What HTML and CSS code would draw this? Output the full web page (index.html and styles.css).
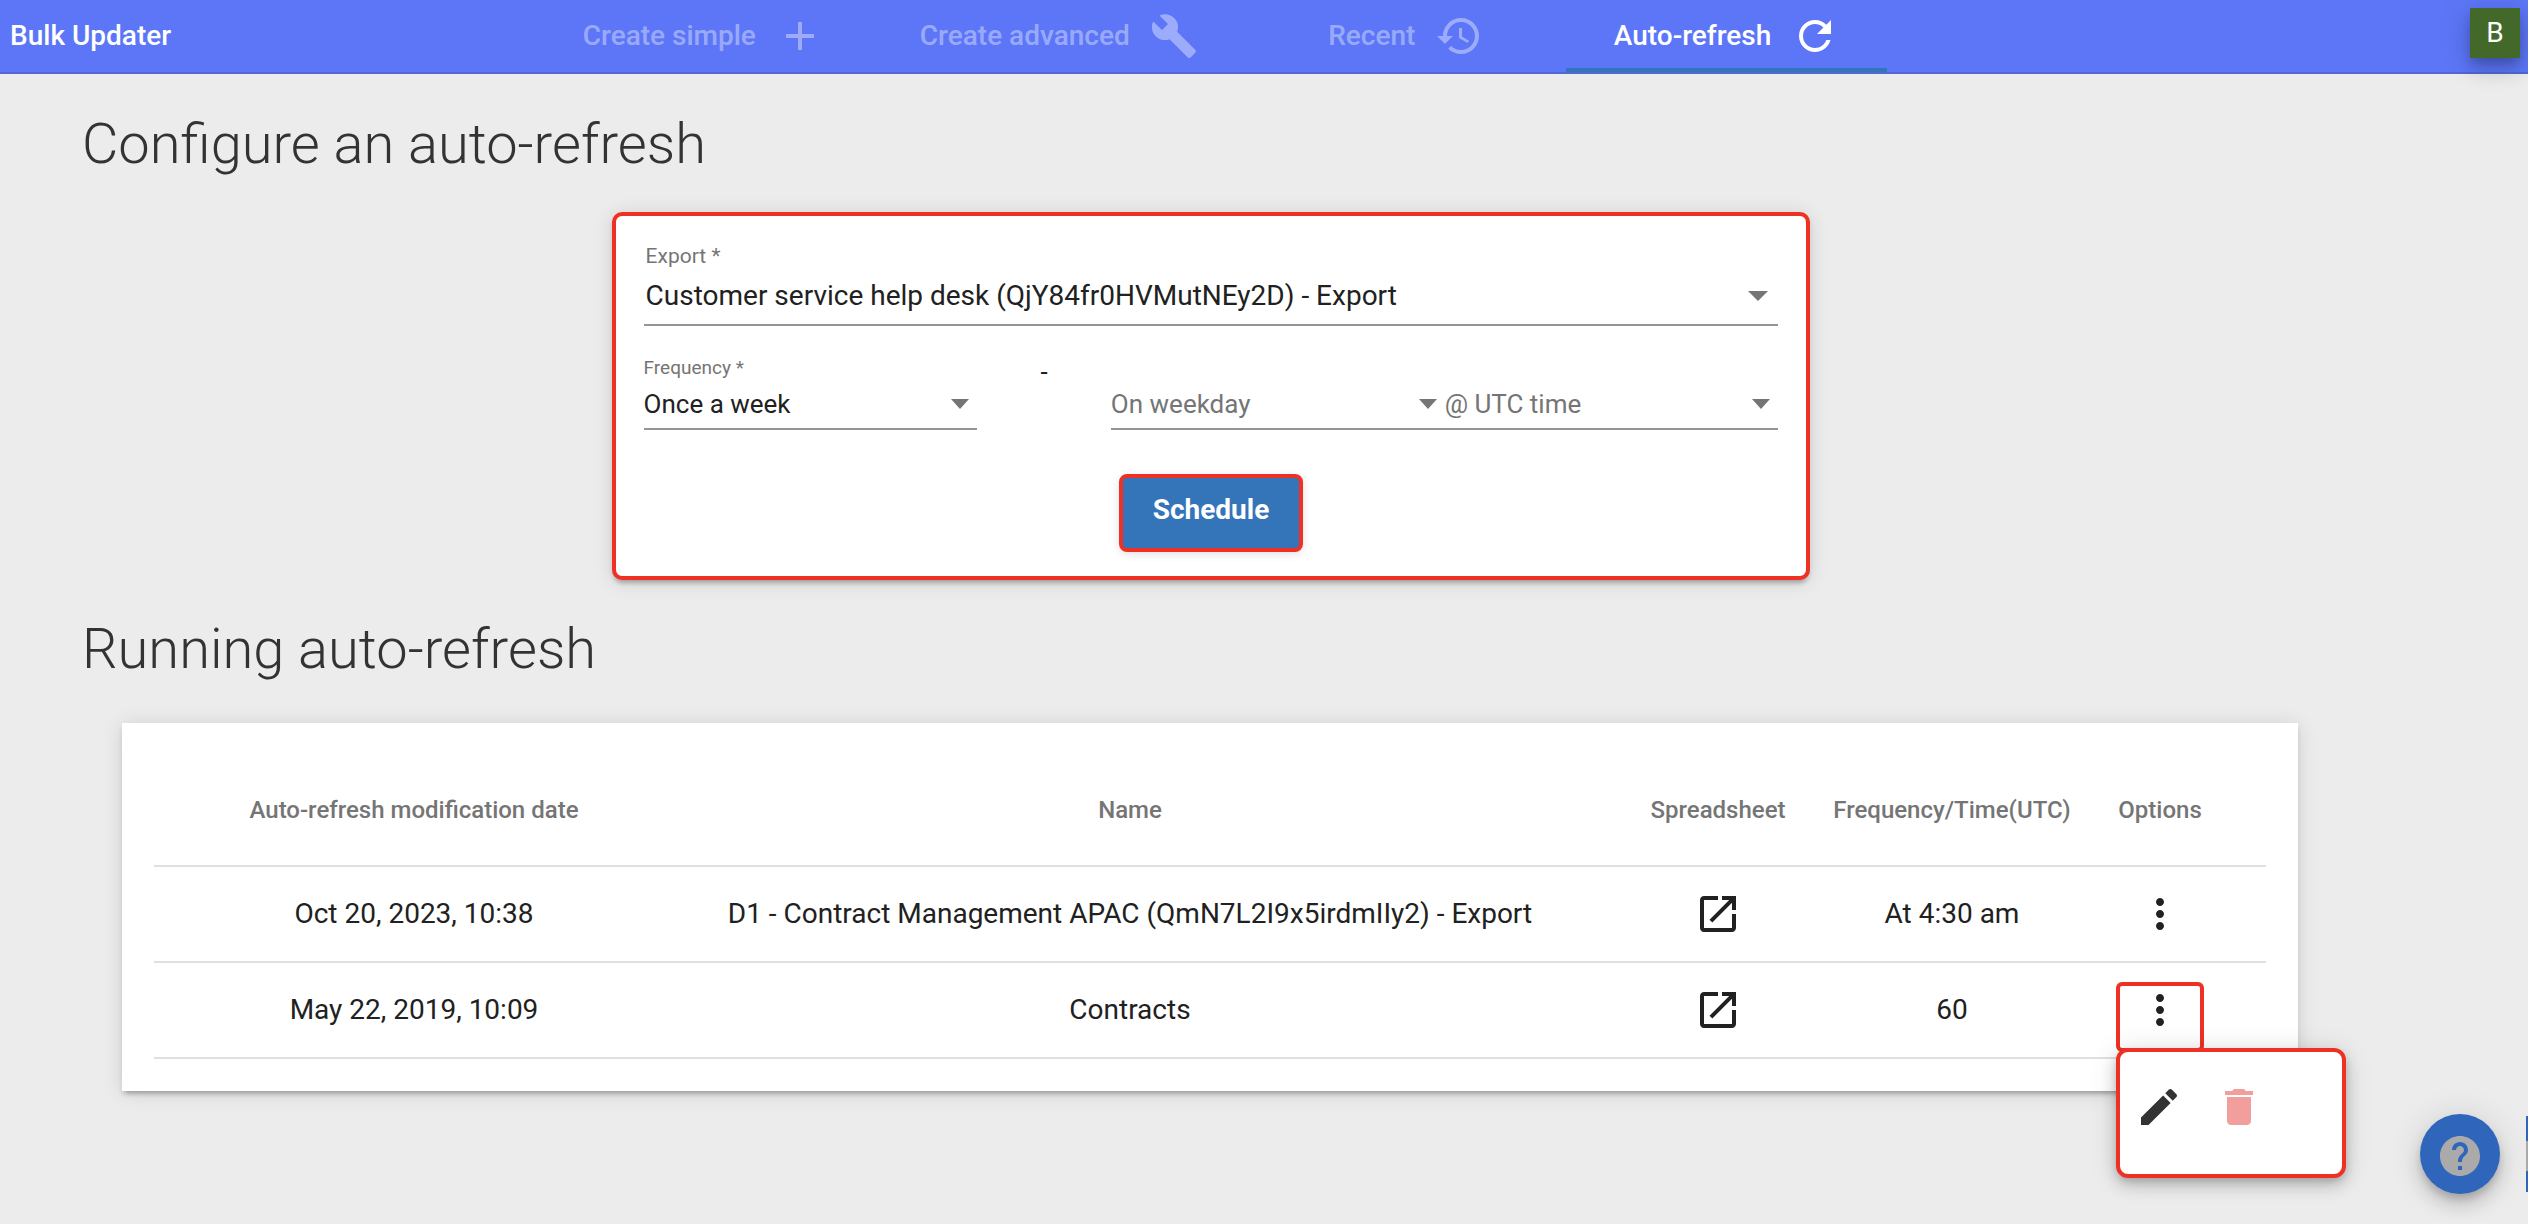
FILE: index.html
```html
<!DOCTYPE html>
<html lang="en">
<head>
<meta charset="utf-8">
<meta name="viewport" content="width=device-width, initial-scale=1">
<title>Bulk Updater</title>
<link rel="stylesheet" href="styles.css">
</head>
<body>
<header class="topbar">
  <span class="brand">Bulk Updater</span>
  <nav class="tabs">
    <a class="tab" href="#simple">Create simple
      <svg class="icon" viewBox="0 0 24 24" aria-hidden="true"><path d="M19 13h-6v6h-2v-6H5v-2h6V5h2v6h6v2z"/></svg></a>
    <a class="tab" href="#advanced">Create advanced
      <svg class="icon" viewBox="0 0 24 24" aria-hidden="true"><path d="M22.7 19l-9.1-9.1c.9-2.3.4-5-1.5-6.9-2-2-5-2.4-7.4-1.3L9 6 6 9 1.6 4.7C.4 7.1.9 10.1 2.9 12.1c1.9 1.9 4.6 2.4 6.9 1.5l9.1 9.1c.4.4 1 .4 1.4 0l2.3-2.3c.5-.4.5-1.1.1-1.4z"/></svg></a>
    <a class="tab" href="#recent">Recent
      <svg class="icon" viewBox="0 0 24 24" aria-hidden="true"><path d="M13 3c-4.97 0-9 4.03-9 9H1l3.89 3.89.07.14L9 12H6c0-3.87 3.13-7 7-7s7 3.13 7 7-3.13 7-7 7c-1.93 0-3.68-.79-4.94-2.06l-1.42 1.42C8.27 19.99 10.51 21 13 21c4.97 0 9-4.03 9-9s-4.03-9-9-9zm-1 5v5l4.28 2.54.72-1.21-3.5-2.08V8H12z"/></svg></a>
    <a class="tab tab-active" href="#auto-refresh" aria-current="page">Auto-refresh
      <svg class="icon" viewBox="0 0 24 24" aria-hidden="true"><path d="M17.65 6.35C16.2 4.9 14.21 4 12 4c-4.42 0-7.99 3.58-7.99 8s3.57 8 7.99 8c3.73 0 6.84-2.55 7.73-6h-2.08c-.82 2.33-3.04 4-5.65 4-3.31 0-6-2.69-6-6s2.69-6 6-6c1.66 0 3.14.69 4.22 1.78L13 11h7V4l-2.35 2.35z"/></svg></a>
  </nav>
  <button class="avatar" type="button" aria-label="Account">B</button>
</header>

<main class="page">
  <h1 class="title">Configure an auto-refresh</h1>
  <form class="form-card">
    <div class="field field-large">
      <label class="label" for="export">Export *</label>
      <div class="control">
        <select id="export"><option>Customer service help desk (QjY84fr0HVMutNEy2D) - Export</option></select>
      </div>
    </div>
    <div class="schedule-row">
      <div class="field">
        <label class="label" for="frequency">Frequency *</label>
        <div class="control">
          <select id="frequency"><option>Once a week</option></select>
        </div>
      </div>
      <span class="dash">-</span>
      <div class="field">
        <div class="control">
          <select class="placeholder" aria-label="Weekday"><option>On weekday</option></select>
        </div>
      </div>
      <div class="field">
        <div class="control">
          <select class="placeholder" aria-label="UTC time"><option>@ UTC time</option></select>
        </div>
      </div>
    </div>
    <button class="submit" type="button">Schedule</button>
  </form>

  <h2 class="title title-jobs">Running auto-refresh</h2>
  <section class="table-card">
    <table class="jobs">
      <thead>
        <tr>
          <th class="col-date">Auto-refresh modification date</th>
          <th>Name</th>
          <th class="col-sheet">Spreadsheet</th>
          <th class="col-freq">Frequency/Time(UTC)</th>
          <th class="col-options">Options</th>
        </tr>
      </thead>
      <tbody>
        <tr>
          <td class="col-date">Oct 20, 2023, 10:38</td>
          <td>D1 - Contract Management APAC (QmN7L2I9x5irdmIIy2) - Export</td>
          <td><a class="icon-link" href="#sheet-1" aria-label="Open spreadsheet"><svg class="icon" viewBox="0 0 24 24" aria-hidden="true"><path d="M19 19H5V5h7V3H5c-1.11 0-2 .9-2 2v14c0 1.1.89 2 2 2h14c1.1 0 2-.9 2-2v-7h-2v7zM14 3v2h3.59l-9.83 9.83 1.41 1.41L19 6.41V10h2V3h-7z"/></svg></a></td>
          <td>At 4:30 am</td>
          <td class="col-options">
            <div class="options">
              <button class="icon-button" type="button" aria-label="Options"><svg class="icon" viewBox="0 0 24 24" aria-hidden="true"><path d="M12 8c1.1 0 2-.9 2-2s-.9-2-2-2-2 .9-2 2 .9 2 2 2zm0 2c-1.1 0-2 .9-2 2s.9 2 2 2 2-.9 2-2-.9-2-2-2zm0 6c-1.1 0-2 .9-2 2s.9 2 2 2 2-.9 2-2-.9-2-2-2z"/></svg></button>
            </div>
          </td>
        </tr>
        <tr>
          <td class="col-date">May 22, 2019, 10:09</td>
          <td>Contracts</td>
          <td><a class="icon-link" href="#sheet-2" aria-label="Open spreadsheet"><svg class="icon" viewBox="0 0 24 24" aria-hidden="true"><path d="M19 19H5V5h7V3H5c-1.11 0-2 .9-2 2v14c0 1.1.89 2 2 2h14c1.1 0 2-.9 2-2v-7h-2v7zM14 3v2h3.59l-9.83 9.83 1.41 1.41L19 6.41V10h2V3h-7z"/></svg></a></td>
          <td>60</td>
          <td class="col-options">
            <div class="options options-open">
              <button class="icon-button" type="button" aria-label="Options" aria-expanded="true"><svg class="icon" viewBox="0 0 24 24" aria-hidden="true"><path d="M12 8c1.1 0 2-.9 2-2s-.9-2-2-2-2 .9-2 2 .9 2 2 2zm0 2c-1.1 0-2 .9-2 2s.9 2 2 2 2-.9 2-2-.9-2-2-2zm0 6c-1.1 0-2 .9-2 2s.9 2 2 2 2-.9 2-2-.9-2-2-2z"/></svg></button>
              <div class="menu">
                <button class="icon-button edit" type="button" aria-label="Edit"><svg class="icon" viewBox="0 0 24 24" aria-hidden="true"><path d="M3 17.25V21h3.75L17.81 9.94l-3.75-3.75L3 17.25zM20.71 7.04c.39-.39.39-1.02 0-1.41l-2.34-2.34c-.39-.39-1.02-.39-1.41 0l-1.83 1.83 3.75 3.75 1.83-1.83z"/></svg></button>
                <button class="icon-button delete" type="button" aria-label="Delete"><svg class="icon" viewBox="0 0 24 24" aria-hidden="true"><path d="M6 19c0 1.1.9 2 2 2h8c1.1 0 2-.9 2-2V7H6v12zM19 4h-3.500l-1-1h-5l-1 1H5v2h14V4z"/></svg></button>
              </div>
            </div>
          </td>
        </tr>
      </tbody>
    </table>
  </section>
</main>

<button class="help" type="button" aria-label="Help"><svg class="icon" viewBox="0 0 24 24" aria-hidden="true"><path d="M12 2C6.48 2 2 6.48 2 12s4.480 10 10 10 10-4.480 10-10S17.520 2 12 2zm1 17h-2v-2h2v2zm2.070-7.750l-.9.92C13.450 12.900 13 13.500 13 15h-2v-.5c0-1.100.45-2.100 1.170-2.830l1.240-1.260c.37-.36.59-.86.59-1.410 0-1.100-.9-2-2-2s-2 .9-2 2H8c0-2.210 1.790-4 4-4s4 1.790 4 4c0 .88-.36 1.680-.93 2.250z"/></svg></button>
<span class="edge-tab"></span>
</body>
</html>
```

FILE: styles.css
```css
:root {
  --red: #ee3124;
  --blue: #3474b9;
  --text: #212121;
  --muted: #757575;
  --gutter: 106px;
}

* { box-sizing: border-box; }

body {
  margin: 0;
  min-height: 100vh;
  overflow-x: hidden;
  background: #ececec;
  color: var(--text);
  font: 400 28px/36px Roboto, sans-serif;
}

button {
  padding: 0;
  border: 0;
  background: none;
  color: inherit;
  font: inherit;
  cursor: pointer;
}

.icon {
  display: block;
  flex: none;
  width: 48px;
  height: 48px;
  fill: currentColor;
}

/* Top bar */
.topbar {
  display: grid;
  grid-template-columns: 1fr auto 1fr var(--gutter);
  border-bottom: 2px solid #5069d4;
  background: #5c76f7;
  color: #fff;
  font-weight: 500;
}

.brand {
  align-self: center;
  padding-left: 10px;
}

.tabs { display: flex; }

.tab {
  display: flex;
  align-items: center;
  justify-content: center;
  gap: 20px;
  min-width: 320px;
  height: 72px;
  padding: 3px 48px 0;
  border-bottom: 4px solid transparent;
  color: rgba(255, 255, 255, 0.4);
  text-decoration: none;
}

.tab-active {
  border-bottom-color: var(--blue);
  color: #fff;
}

.avatar {
  grid-column: 4;
  align-self: start;
  justify-self: end;
  width: 50px;
  height: 50px;
  margin: 8px 8px 0 0;
  background: #42692a;
  font-weight: 400;
  box-shadow: 0 6px 10px -2px rgba(0, 0, 0, 0.2), 0 12px 20px rgba(0, 0, 0, 0.14), 0 2px 36px rgba(0, 0, 0, 0.12);
}

/* Page */
.page {
  margin-right: var(--gutter);
  padding: 38px 0 40px;
}

.title {
  margin: 0 0 36px 82px;
  color: #333;
  font-size: 56px;
  font-weight: 300;
  line-height: 64px;
}

.title-jobs { margin-bottom: 42px; }

/* Form */
.form-card {
  display: flex;
  flex-direction: column;
  width: 49.5%;
  margin: 0 auto 37px;
  padding: 28px 28px 24px;
  border: 4px solid var(--red);
  border-radius: 10px;
  background: #fff;
  box-shadow: 0 6px 4px -4px rgba(0, 0, 0, 0.2), 0 4px 4px rgba(0, 0, 0, 0.1), 0 2px 20px rgba(0, 0, 0, 0.12);
}

.label {
  display: block;
  color: var(--muted);
  font-size: 19px;
  line-height: 24px;
}

.control {
  display: grid;
  align-items: center;
  border-bottom: 2px solid #949494;
}

.control select {
  grid-area: 1 / 1;
  width: 100%;
  height: 48px;
  padding: 0;
  border: 0;
  border-radius: 0;
  background: none;
  color: var(--text);
  font: inherit;
  font-size: 26px;
  appearance: none;
}

.control select.placeholder { color: var(--muted); }

.control::after {
  content: "";
  grid-area: 1 / 1;
  justify-self: end;
  margin-right: 8px;
  border: 9px solid transparent;
  border-top: 10px solid var(--muted);
  border-bottom: 0;
  pointer-events: none;
}

.field-large .label {
  padding-left: 2px;
  font-size: 21px;
}

.field-large select {
  height: 56px;
  padding-left: 2px;
  font-size: 28px;
}

.field-large .control::after {
  margin-right: 10px;
  border-width: 10px 10px 0;
}

.schedule-row {
  display: grid;
  grid-template-columns: 5fr 2fr 5fr 5fr;
  align-items: end;
  margin-top: 30px;
}

.dash {
  align-self: start;
  font-size: 26px;
  line-height: 32px;
  text-align: center;
}

.submit {
  align-self: center;
  height: 78px;
  margin-top: 44px;
  padding: 0 30px 6px;
  border: 4px solid var(--red);
  border-radius: 8px;
  background: var(--blue);
  color: #fff;
  font-weight: 700;
  box-shadow: 0 2px 10px rgba(0, 0, 0, 0.12);
}

/* Jobs table */
.table-card {
  margin: 0 124px 0 122px;
  padding: 32px;
  background: #fff;
  box-shadow: 0 6px 4px -4px rgba(0, 0, 0, 0.2), 0 4px 4px rgba(0, 0, 0, 0.1), 0 2px 20px rgba(0, 0, 0, 0.12);
}

.jobs {
  width: 100%;
  border-collapse: separate;
  border-spacing: 0;
  table-layout: fixed;
}

.jobs th,
.jobs td {
  height: 96px;
  padding: 0;
  border-bottom: 2px solid #e0e0e0;
  text-align: center;
}

.jobs th {
  height: 112px;
  color: var(--muted);
  font-size: 24px;
  font-weight: 500;
}

.jobs .col-date {
  width: 480px;
  padding-left: 40px;
}

.col-sheet { width: 184px; }
.col-freq { width: 284px; }

.jobs .col-options {
  width: 172px;
  padding-right: 40px;
}

.icon-link,
.icon-button {
  display: block;
  width: 48px;
  height: 48px;
  color: inherit;
}

.icon-link { margin: 0 auto; }

.options {
  position: relative;
  width: 48px;
  margin: 0 auto;
}

.options-open::before {
  content: "";
  position: absolute;
  inset: -4px -20px -18px;
  border: 4px solid var(--red);
  border-radius: 6px;
  pointer-events: none;
}

.menu {
  position: absolute;
  top: 62px;
  left: -20px;
  display: flex;
  gap: 32px;
  width: 230px;
  height: 130px;
  padding: 31px 15px;
  border: 4px solid var(--red);
  border-radius: 12px;
  background: #fff;
  box-shadow: 0 4px 8px -2px rgba(0, 0, 0, 0.2), 0 8px 16px rgba(0, 0, 0, 0.14), 0 2px 28px rgba(0, 0, 0, 0.12);
}

.edit { color: #333; }
.delete { color: #f29e9c; }

/* Help */
.help {
  position: fixed;
  right: 28px;
  bottom: 30px;
  display: grid;
  place-items: center;
  width: 80px;
  height: 80px;
  padding-top: 4px;
  border-radius: 50%;
  background: #2f65bb;
  color: #aaa;
  box-shadow: 0 6px 10px -2px rgba(0, 0, 0, 0.2), 0 12px 20px rgba(0, 0, 0, 0.14), 0 2px 36px rgba(0, 0, 0, 0.12);
}

.edge-tab {
  position: fixed;
  right: 0;
  bottom: 32px;
  width: 2px;
  height: 76px;
  border: solid #2f65bb;
  border-width: 25px 0 21px;
  background: #aaa;
}
```
